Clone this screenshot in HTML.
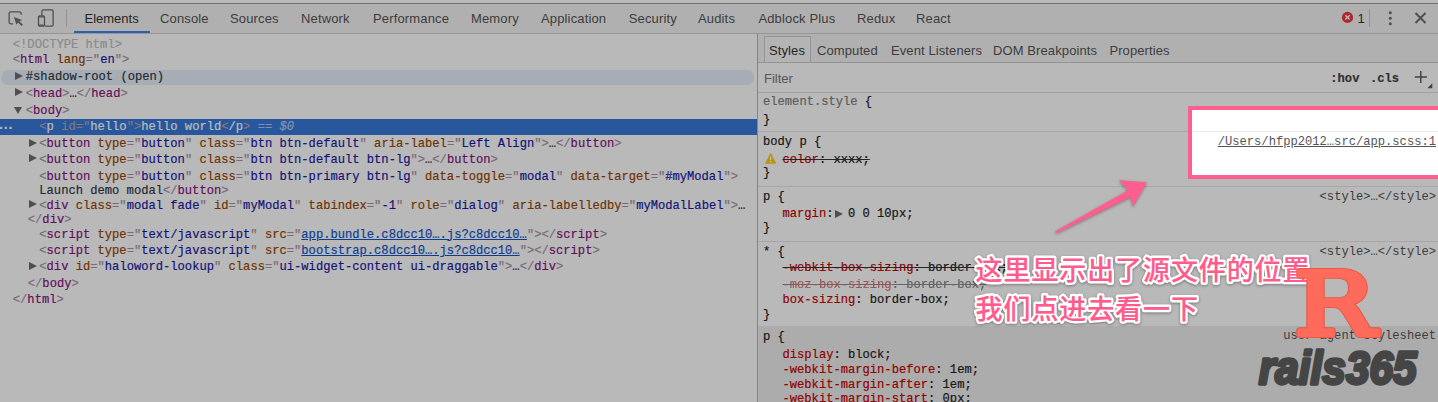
<!DOCTYPE html>
<html lang="zh">
<head>
<meta charset="utf-8">
<title>devtools</title>
<style>
*{box-sizing:border-box;margin:0;padding:0}
html,body{width:1438px;height:402px;overflow:hidden;background:#fff}
body{position:relative;font-family:"Liberation Sans",sans-serif;font-size:13px;color:#303030}
.abs{position:absolute}
#topstrip{left:0;top:0;width:1438px;height:3px;background:#fff}
#topline{left:0;top:3px;width:1438px;height:1px;background:#9e9e9e}
#toolbar{left:0;top:4px;width:1438px;height:29px;background:#f3f3f3}
#tbline{left:0;top:33px;width:1438px;height:1px;background:#cfcfcf}
.tab{position:absolute;top:4px;height:29px;line-height:29px;font-size:13px;color:#555;white-space:nowrap;letter-spacing:.15px}
.tab:first-child{color:#333;letter-spacing:0;margin-left:-.5px}
#tabul{left:74px;top:31px;width:76px;height:2px;background:#3e82f7}
.stab{position:absolute;top:36.6px;height:27px;line-height:28px;font-size:13px;color:#555;white-space:nowrap;letter-spacing:.1px}
.stab:first-child{color:#333}
.ln{position:absolute;height:16px;line-height:16px;white-space:pre;font-family:"Liberation Mono",monospace;font-size:12.13px;color:#222;-webkit-text-stroke:.18px}
.b{color:#a894a6}.t{color:#881280}
.an{color:#994500}.av{color:#1a1aa6}.lk{text-decoration:underline;color:#1155cc}
.tx{color:#303942}.dt{color:#c0c0c0}
.ar{position:absolute;width:0;height:0}
.ar.rt{border-left:8.2px solid #6e6e6e;border-top:4.6px solid transparent;border-bottom:4.6px solid transparent}
.ar.dn{border-top:7.8px solid #6e6e6e;border-left:4.7px solid transparent;border-right:4.7px solid transparent}
#hl{left:1px;top:70px;width:753px;height:14.5px;border-radius:7px;background:rgba(56,121,217,0.12)}
#selrow{left:0;top:119px;width:757px;height:15.5px;background:#3879d9}
#selrow .ln{top:-0.5px;color:#fff}
#selrow span{color:#fff}
#selrow .dim{color:#b3a3b1}
#selrow .dim2{color:#b5c9ee}
#vdiv{left:757px;top:34px;width:1px;height:368px;background:#b9b9b9}
#stb{left:758px;top:34px;width:680px;height:28px;background:#f3f3f3}
#stbline{left:758px;top:62px;width:680px;height:1px;background:#ccc}
#stylestab{left:764px;top:36px;width:47px;height:26px;background:#f9f9f9;border:1px solid #ccc;border-bottom:none}
#filterline{left:758px;top:92px;width:680px;height:1px;background:#ddd}
.sep{position:absolute;left:758px;width:680px;height:1px;background:#e6e6e6}
#ua{left:758px;top:326px;width:680px;height:76px;background:#eee}
.sel{color:#222}.gsel{color:#808080}
.pn{color:#c80000}
.pl.st{text-decoration:line-through;text-decoration-color:#333}
.faded{opacity:.55}
.ex{display:inline-block;width:0;height:0;border-left:8px solid #6e6e6e;border-top:4.5px solid transparent;border-bottom:4.5px solid transparent;margin:0 4.5px 0 2px;vertical-align:-1px}
.src{position:absolute;right:2px;height:16px;line-height:16px;font-family:"Liberation Mono",monospace;font-size:12.13px;color:#555;white-space:pre}
.src.u{text-decoration:underline}
#overlay{left:0;top:0;width:1438px;height:402px;background:rgba(0,0,0,0.275)}
#box{left:1187.8px;top:105.5px;width:260px;height:73.8px;background:#fff;border:4.3px solid #ff5f8f}
#cn{left:975px;top:0;font-family:"Liberation Sans","Noto Sans CJK SC",sans-serif;font-weight:700;font-size:28px;color:#ff5c8d;white-space:nowrap}
.cl{position:absolute;left:0;height:40px;line-height:40px;-webkit-text-stroke:4px #fff;paint-order:stroke fill;text-shadow:0 1px 3px rgba(0,0,0,.3)}
</style>
</head>
<body>
<div id="topstrip" class="abs"></div>
<div id="topline" class="abs"></div>
<div id="toolbar" class="abs"></div>
<div id="tbline" class="abs"></div>
<div id="tabs" class="abs" style="left:0;top:0">
<div class="tab" style="left:85px">Elements</div>
<div class="tab" style="left:160px">Console</div>
<div class="tab" style="left:230px">Sources</div>
<div class="tab" style="left:301px">Network</div>
<div class="tab" style="left:373px">Performance</div>
<div class="tab" style="left:471px">Memory</div>
<div class="tab" style="left:541px">Application</div>
<div class="tab" style="left:628.7px">Security</div>
<div class="tab" style="left:698px">Audits</div>
<div class="tab" style="left:758.4px">Adblock Plus</div>
<div class="tab" style="left:857px">Redux</div>
<div class="tab" style="left:916px">React</div>
</div>
<div id="tabul" class="abs"></div>
<svg class="abs" style="left:0;top:4px" width="80" height="29" viewBox="0 0 80 29">
<g fill="none" stroke="#6e6e6e" stroke-width="1.3">
<path d="M21.1 10.8V9.5a1.7 1.7 0 0 0-1.7-1.7H10.8a1.7 1.7 0 0 0-1.7 1.7V18.1a1.7 1.7 0 0 0 1.7 1.7H13.2"/>
<path d="M41.9 11.4V7.2a1.3 1.3 0 0 1 1.3-1.3H51.8a1.3 1.3 0 0 1 1.3 1.3V20.8a1.3 1.3 0 0 1-1.3 1.3H45"/>
<rect x="38.5" y="12" width="6" height="10.1" rx="1"/>
</g>
<path d="M38.5 12.4h6v1.2h-6zM38.5 20.4h6v1.4h-6z" fill="#6e6e6e"/>
<path d="M13.9 12.9L22.1 15.9L19.4 17.3L22.9 20.7L21.6 22L18.1 18.5L16.4 20.8Z" fill="#6e6e6e"/>
<rect x="66" y="5" width="1" height="18" fill="#ccc"/>
</svg>
<!-- right toolbar icons -->
<svg class="abs" style="left:1330px;top:4px" width="108" height="29" viewBox="0 0 108 29">
<circle cx="17.5" cy="13.4" r="5.6" fill="#eb3941"/>
<path d="M15.3 11.2l4.4 4.4M19.7 11.2l-4.4 4.4" stroke="#fff" stroke-width="1.4" fill="none"/>
<rect x="39" y="5" width="1" height="18" fill="#ccc"/>
<circle cx="60.3" cy="8.7" r="1.5" fill="#6e6e6e"/><circle cx="60.3" cy="14.2" r="1.5" fill="#6e6e6e"/><circle cx="60.3" cy="19.8" r="1.5" fill="#6e6e6e"/>
<path d="M85.5 9l10 10M95.5 9l-10 10" stroke="#6e6e6e" stroke-width="2" fill="none"/>
</svg>
<div class="abs" style="left:1357.5px;top:4px;height:29px;line-height:29px;font-size:13px;color:#333">1</div>

<div id="hl" class="abs"></div>
<div id="selrow" class="abs"><div class="ln" style="left:-1px;font-family:'Liberation Sans',sans-serif;font-weight:bold;font-size:14px;letter-spacing:.9px;margin-top:-2.7px;-webkit-text-stroke:0">...</div><div class="ln" style="left:39.3px"><span class="dim">&lt;</span>p <span class="dim">id="</span>hello<span class="dim">"&gt;</span>hello world<span class="dim">&lt;</span>/p<span class="dim">&gt;</span><span class="dim2"> == </span><span class="dim2" style="font-style:italic">$0</span></div></div>
<div class="ln" style="top:36.7px;left:12.8px"><span class="dt">&lt;!DOCTYPE html&gt;</span></div>
<div class="ln" style="top:52.4px;left:12.8px"><span class="b">&lt;</span><span class="t">html</span> <span class="an">lang</span><span class="b">="</span><span class="av">en</span><span class="b">"</span><span class="b">&gt;</span></div>
<div class="ln" style="top:69.2px;left:25.8px"><span class="tx">#shadow-root (open)</span></div>
<div class="ar rt" style="top:71.8px;left:14.6px"></div>
<div class="ln" style="top:85.5px;left:25.8px"><span class="b">&lt;</span><span class="t">head</span><span class="b">&gt;</span><span class="tx">…</span><span class="b">&lt;/</span><span class="t">head</span><span class="b">&gt;</span></div>
<div class="ar rt" style="top:88.1px;left:14.6px"></div>
<div class="ln" style="top:102.7px;left:25.8px"><span class="b">&lt;</span><span class="t">body</span><span class="b">&gt;</span></div>
<div class="ar dn" style="top:106.5px;left:14px"></div>
<div class="ln" style="top:135.9px;left:39.3px"><span class="b">&lt;</span><span class="t">button</span> <span class="an">type</span><span class="b">="</span><span class="av">button</span><span class="b">"</span> <span class="an">class</span><span class="b">="</span><span class="av">btn btn-default</span><span class="b">"</span> <span class="an">aria-label</span><span class="b">="</span><span class="av">Left Align</span><span class="b">"</span><span class="b">&gt;</span><span class="tx">…</span><span class="b">&lt;/</span><span class="t">button</span><span class="b">&gt;</span></div>
<div class="ar rt" style="top:138.5px;left:28.6px"></div>
<div class="ln" style="top:151.7px;left:39.3px"><span class="b">&lt;</span><span class="t">button</span> <span class="an">type</span><span class="b">="</span><span class="av">button</span><span class="b">"</span> <span class="an">class</span><span class="b">="</span><span class="av">btn btn-default btn-lg</span><span class="b">"</span><span class="b">&gt;</span><span class="tx">…</span><span class="b">&lt;/</span><span class="t">button</span><span class="b">&gt;</span></div>
<div class="ar rt" style="top:154.3px;left:28.6px"></div>
<div class="ln" style="top:168.5px;left:39.3px"><span class="b">&lt;</span><span class="t">button</span> <span class="an">type</span><span class="b">="</span><span class="av">button</span><span class="b">"</span> <span class="an">class</span><span class="b">="</span><span class="av">btn btn-primary btn-lg</span><span class="b">"</span> <span class="an">data-toggle</span><span class="b">="</span><span class="av">modal</span><span class="b">"</span> <span class="an">data-target</span><span class="b">="</span><span class="av">#myModal</span><span class="b">"</span><span class="b">&gt;</span></div>
<div class="ln" style="top:182.5px;left:39.3px"><span class="tx">Launch demo modal</span><span class="b">&lt;/</span><span class="t">button</span><span class="b">&gt;</span></div>
<div class="ln" style="top:197.8px;left:39.3px"><span class="b">&lt;</span><span class="t">div</span> <span class="an">class</span><span class="b">="</span><span class="av">modal fade</span><span class="b">"</span> <span class="an">id</span><span class="b">="</span><span class="av">myModal</span><span class="b">"</span> <span class="an">tabindex</span><span class="b">="</span><span class="av">-1</span><span class="b">"</span> <span class="an">role</span><span class="b">="</span><span class="av">dialog</span><span class="b">"</span> <span class="an">aria-labelledby</span><span class="b">="</span><span class="av">myModalLabel</span><span class="b">"</span><span class="b">&gt;</span><span class="tx">…</span></div>
<div class="ar rt" style="top:200.4px;left:28.6px"></div>
<div class="ln" style="top:211.6px;left:27.8px"><span class="b">&lt;/</span><span class="t">div</span><span class="b">&gt;</span></div>
<div class="ln" style="top:226.6px;left:39.3px"><span class="b">&lt;</span><span class="t">script</span> <span class="an">type</span><span class="b">="</span><span class="av">text/javascript</span><span class="b">"</span> <span class="an">src</span><span class="b">="</span><span class="av lk">app.bundle.c8dcc10….js?c8dcc10…</span><span class="b">"</span><span class="b">&gt;</span><span class="b">&lt;/</span><span class="t">script</span><span class="b">&gt;</span></div>
<div class="ln" style="top:242.9px;left:39.3px"><span class="b">&lt;</span><span class="t">script</span> <span class="an">type</span><span class="b">="</span><span class="av">text/javascript</span><span class="b">"</span> <span class="an">src</span><span class="b">="</span><span class="av lk">bootstrap.c8dcc10….js?c8dcc10…</span><span class="b">"</span><span class="b">&gt;</span><span class="b">&lt;/</span><span class="t">script</span><span class="b">&gt;</span></div>
<div class="ln" style="top:259.2px;left:39.3px"><span class="b">&lt;</span><span class="t">div</span> <span class="an">id</span><span class="b">="</span><span class="av">haloword-lookup</span><span class="b">"</span> <span class="an">class</span><span class="b">="</span><span class="av">ui-widget-content ui-draggable</span><span class="b">"</span><span class="b">&gt;</span><span class="tx">…</span><span class="b">&lt;/</span><span class="t">div</span><span class="b">&gt;</span></div>
<div class="ar rt" style="top:261.8px;left:28.6px"></div>
<div class="ln" style="top:275.5px;left:27.8px"><span class="b">&lt;/</span><span class="t">body</span><span class="b">&gt;</span></div>
<div class="ln" style="top:291.8px;left:12.8px"><span class="b">&lt;/</span><span class="t">html</span><span class="b">&gt;</span></div>

<div id="vdiv" class="abs"></div>
<div id="stb" class="abs"></div>
<div id="stbline" class="abs"></div>
<div id="stylestab" class="abs"></div>
<div class="abs" style="left:0;top:0">
<div class="stab" style="left:769px">Styles</div>
<div class="stab" style="left:817px">Computed</div>
<div class="stab" style="left:891px">Event Listeners</div>
<div class="stab" style="left:993px">DOM Breakpoints</div>
<div class="stab" style="left:1109.4px">Properties</div>
</div>
<div class="abs" style="left:764px;top:70.8px;height:16px;line-height:16px;font-size:13px;color:#777">Filter</div>
<div class="ln" style="left:1330.3px;top:70.7px;font-weight:bold;color:#444">:hov</div>
<div class="ln" style="left:1370px;top:70.7px;font-weight:bold;color:#444">.cls</div>
<svg class="abs" style="left:1410px;top:66px" width="28" height="26" viewBox="0 0 28 26"><path d="M10.8 5v12M4.8 11h12" stroke="#5a5a5a" stroke-width="1.4" fill="none"/><path d="M22.3 17.2v5h-5z" fill="#5a5a5a"/></svg>
<div id="filterline" class="abs"></div>
<div class="sep" style="top:131px"></div>
<div class="sep" style="top:186px"></div>
<div class="sep" style="top:241px"></div>
<div id="ua" class="abs"></div>
<div class="ln sl" style="top:94.3px;left:763px"><span class="gsel">element.style</span> {</div>
<div class="ln sl" style="top:112.1px;left:763px">}</div>
<div class="ln sl" style="top:133.6px;left:763px"><span class="sel">body p</span> {</div>
<div class="ln sl" style="top:151.6px;left:782.5px"><span class="pl st"><span class="pn">color</span>: xxxx;</span></div>
<div class="ln sl" style="top:165.4px;left:763px">}</div>
<div class="ln sl" style="top:189.0px;left:763px"><span class="sel">p</span> {</div>
<div class="ln sl" style="top:206.0px;left:782.5px"><span class="pl"><span class="pn">margin</span>:<span class="ex"></span>0 0 10px;</span></div>
<div class="ln sl" style="top:220.3px;left:763px">}</div>
<div class="ln sl" style="top:244.1px;left:763px"><span class="sel">*</span> {</div>
<div class="ln sl" style="top:260.4px;left:782.5px"><span class="pl st"><span class="pn">-webkit-box-sizing</span>: border-box;</span></div>
<div class="ln sl" style="top:276.9px;left:782.5px"><span class="faded"><span class="pl st"><span class="pn">-moz-box-sizing</span>: border-box;</span></span></div>
<div class="ln sl" style="top:291.5px;left:782.5px"><span class="pl"><span class="pn">box-sizing</span>: border-box;</span></div>
<div class="ln sl" style="top:307.0px;left:763px">}</div>
<div class="ln sl" style="top:328.9px;left:763px"><span class="sel">p</span> {</div>
<div class="ln sl" style="top:346.5px;left:782.5px"><span class="pl"><span class="pn">display</span>: block;</span></div>
<div class="ln sl" style="top:361.7px;left:782.5px"><span class="pl"><span class="pn">-webkit-margin-before</span>: 1em;</span></div>
<div class="ln sl" style="top:377.4px;left:782.5px"><span class="pl"><span class="pn">-webkit-margin-after</span>: 1em;</span></div>
<div class="ln sl" style="top:391.3px;left:782.5px"><span class="pl"><span class="pn">-webkit-margin-start</span>: 0px;</span></div>
<svg class="abs" style="left:764.7px;top:153px" width="11.3" height="11" viewBox="0 0 12 11" preserveAspectRatio="none"><path d="M6 0.6L11.4 10.2H0.6z" fill="#ffcf0d" stroke="#ffcf0d" stroke-width="1" stroke-linejoin="round"/><rect x="5.3" y="3.4" width="1.4" height="3.8" fill="#fff"/><rect x="5.3" y="8" width="1.4" height="1.4" fill="#fff"/></svg>
<div class="src" style="top:189.2px">&lt;style&gt;…&lt;/style&gt;</div>
<div class="src" style="top:244.3px">&lt;style&gt;…&lt;/style&gt;</div>
<div class="src" style="top:328.2px">user agent stylesheet</div>
<div class="src u" style="top:133.6px">/Users/hfpp2012…src/app.scss:1</div>

<div id="overlay" class="abs"></div>

<div id="box" class="abs"></div>
<div class="abs" style="left:1192px;top:131px;width:246px;height:1px;background:#ebebeb"></div>
<div class="src u" style="top:133.6px;color:#555">/Users/hfpp2012…src/app.scss:1</div>

<svg class="abs" style="left:1040px;top:170px;filter:drop-shadow(0 1px 1.5px rgba(0,0,0,.35))" width="120" height="75" viewBox="1040 170 120 75">
<path d="M1055.3 231.3 L1127.6 190.6 L1119 180.3 L1146.9 182.3 L1132.9 206.4 L1130.4 197 L1056.3 233.3 L1054.9 230.7 Z" fill="#ff5f8f"/>
</svg>

<svg id="cn" class="abs" style="left:960px;top:240px" width="360" height="100" viewBox="960 240 360 100">
<g font-family="Liberation Sans,Noto Sans CJK SC,sans-serif" font-weight="500" font-size="27" letter-spacing="0.9">
<g fill="#fff" stroke="#fff" stroke-width="4.8" stroke-linejoin="round" style="filter:drop-shadow(0 1px 1.5px rgba(0,0,0,.35))">
<text x="975.6" y="279.5">这里显示出了源文件的位置</text>
<text x="975.6" y="319.4">我们点进去看一下</text>
</g>
<g fill="#ff5c8d" stroke="#ff5c8d" stroke-width="0.15" stroke-linejoin="round">
<text x="975.6" y="279.5">这里显示出了源文件的位置</text>
<text x="975.6" y="319.4">我们点进去看一下</text>
</g>
</g>
</svg>

<svg class="abs" style="left:1240px;top:250px" width="198" height="152" viewBox="1240 250 198 152">
<g transform="translate(1294.2,334.6) scale(1.235,1)" font-family="DejaVu Serif,serif" font-weight="normal" font-size="87.2" stroke-linejoin="round"><text x="0" y="0" fill="#e9523f" stroke="#e9523f" stroke-width="6.2">R</text><text x="0" y="0" fill="#ff6b5a" stroke="#ff6b5a" stroke-width="4.6">R</text></g>
<g transform="translate(1258.8,383.9) scale(0.905,1)"><text x="0" y="0" font-family="Liberation Sans,sans-serif" font-weight="bold" font-style="italic" font-size="46.8" fill="#454545" stroke="#454545" stroke-width="3.4" stroke-linejoin="round" letter-spacing="0">rails365</text></g>
</svg>
</body>
</html>
